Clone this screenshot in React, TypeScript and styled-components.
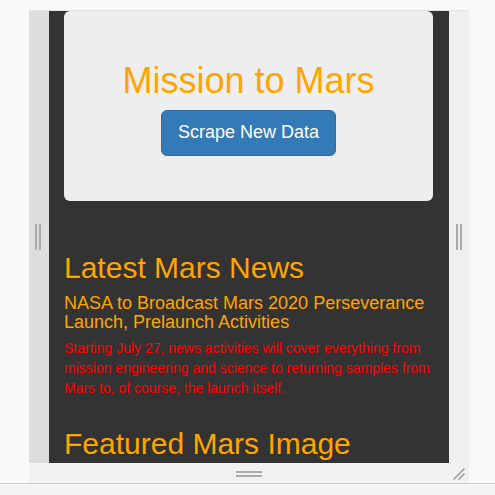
import styled, { createGlobalStyle } from 'styled-components';

const GlobalStyle = createGlobalStyle`
  html, body {
    margin: 0;
    padding: 0;
    background: #f9f9f9;
    font-family: "Liberation Sans", Arial, sans-serif;
    height: 100%;
    overflow: hidden;
  }
`;

const Page = styled.div`
  padding: 10px 0 0 29px;
`;

const Frame = styled.div`
  display: grid;
  grid-template-columns: 20px 400px 20px;
  grid-template-rows: 452px 20px;
  width: 440px;
  border-top: 1px solid #e4e4e4;
`;

const SideStrip = styled.div<{ $side: 'left' | 'right' }>`
  display: flex;
  align-items: center;
  justify-content: center;
  gap: 2px;
  padding-right: ${(p) => (p.$side === 'left' ? '3px' : '0')};
  background: ${(p) => (p.$side === 'left' ? '#dddddd' : '#efefef')};
`;

const VBar = styled.span`
  width: 2px;
  height: 26px;
  background: #aaa;
`;

const BottomStrip = styled.div`
  grid-column: 1 / 4;
  display: grid;
  grid-template-columns: 1fr auto 1fr;
  align-items: center;
  background: #f1f1f1;
`;

const HBars = styled.div`
  grid-column: 2;
  display: flex;
  flex-direction: column;
  gap: 2px;
  margin-top: 2px;
`;

const HBar = styled.span`
  width: 26px;
  height: 2px;
  background: #aaa;
`;

const Grip = styled.svg`
  grid-column: 3;
  justify-self: end;
  margin-right: 4px;
  margin-top: 2px;
`;

const Content = styled.div`
  background: #333;
  overflow: hidden;
  padding: 0 16px 0 15px;
`;

const Jumbotron = styled.div`
  background: #eee;
  border-radius: 6px;
  padding: 30px;
  margin-bottom: 50px;
  text-align: center;
`;

const Title = styled.h1`
  margin: 20px 0 9px;
  font-size: 36px;
  font-weight: 400;
  line-height: 1.1;
  color: #ffa500;
`;

const ButtonRow = styled.p`
  margin: 0 0 15px;
`;

const Button = styled.button`
  font-family: inherit;
  font-size: 18px;
  line-height: 1.3333;
  padding: 10px 16px;
  color: #fff;
  background: #337ab7;
  border: 1px solid #2e6da4;
  border-radius: 6px;
  cursor: pointer;
`;

const Heading = styled.h2`
  margin: 20px 0 10px;
  font-size: 30px;
  font-weight: 400;
  line-height: 1.1;
  color: #ffa500;
`;

const NewsTitle = styled.h4`
  margin: 10px 0 5px;
  font-size: 18px;
  font-weight: 400;
  line-height: 1.1;
  color: #ffa500;
`;

const NewsBody = styled.p`
  margin: 0 0 29px;
  font-size: 14px;
  line-height: 20px;
  color: #ff0000;
`;

const Below = styled.div`
  border-top: 1px solid #cfcfcf;
  background: #f4f4f4;
  height: 11px;
`;

export default function App() {
  return (
    <>
      <GlobalStyle />
      <Page>
        <Frame>
          <SideStrip $side='left'>
            <VBar />
            <VBar />
          </SideStrip>
          <Content>
            <Jumbotron>
              <Title>Mission to Mars</Title>
              <ButtonRow>
                <Button>Scrape New Data</Button>
              </ButtonRow>
            </Jumbotron>
            <Heading>Latest Mars News</Heading>
            <NewsTitle>NASA to Broadcast Mars 2020 Perseverance Launch, Prelaunch Activities</NewsTitle>
            <NewsBody>
              Starting July 27, news activities will cover everything from mission engineering and science to returning samples from Mars to, of course, the launch itself.
            </NewsBody>
            <Heading>Featured Mars Image</Heading>
          </Content>
          <SideStrip $side='right'>
            <VBar />
            <VBar />
          </SideStrip>
          <BottomStrip>
            <HBars>
              <HBar />
              <HBar />
            </HBars>
            <Grip width='12' height='12' viewBox='0 0 12 12'>
              <line x1='0.5' y1='11.5' x2='11.5' y2='0.5' stroke='#999' strokeWidth='1.4' />
              <line x1='5.5' y1='11.5' x2='11.5' y2='5.5' stroke='#999' strokeWidth='1.4' />
            </Grip>
          </BottomStrip>
        </Frame>
      </Page>
      <Below />
    </>
  );
}
